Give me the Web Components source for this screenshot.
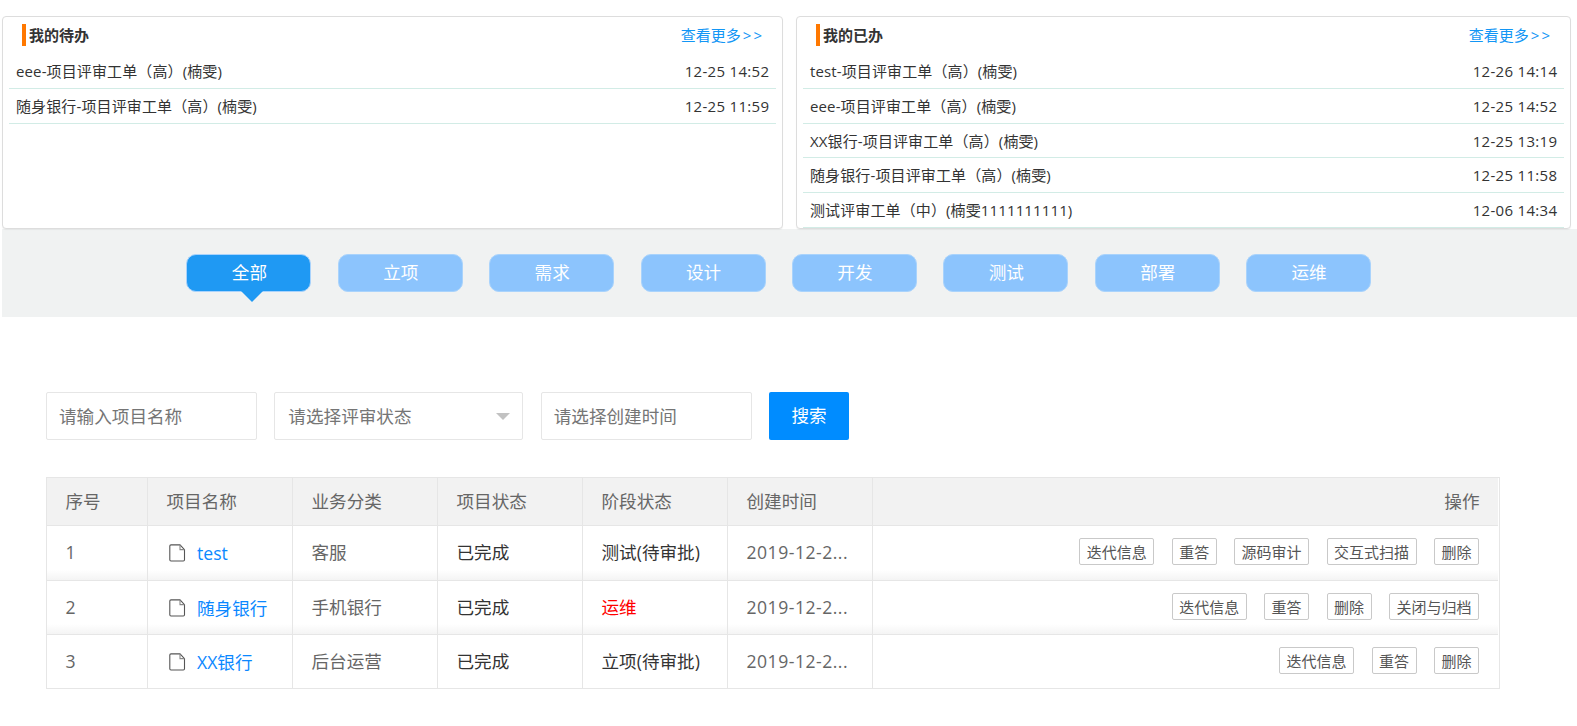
<!DOCTYPE html>
<html lang="zh-CN">
<head>
<meta charset="UTF-8">
<title>项目评审</title>
<style>
    body {
        margin: 0;
        background: #fff;
        color: #333;
        font-family: "Open Sans", "Noto Sans CJK SC", sans-serif;
        font-size: 15px;
        overflow: hidden;
    }
    .panels {
        display: grid;
        grid-template-columns: 781px 775px;
        column-gap: 13px;
        height: 213px;
        padding: 16px 0 0 2px;
    }
    .search {
        display: flex;
        gap: 17.35px;
        padding: 75px 0 0 46px;
    }
    project-table {
        margin: 37px 0 0 46px;
    }
</style>
</head>
<body>
<div class="panels">
    <task-panel heading="我的待办">
        <task-item time="12-25 14:52">eee-项目评审工单（高）(楠雯)</task-item>
        <task-item time="12-25 11:59">随身银行-项目评审工单（高）(楠雯)</task-item>
    </task-panel>
    <task-panel heading="我的已办">
        <task-item time="12-26 14:14">test-项目评审工单（高）(楠雯)</task-item>
        <task-item time="12-25 14:52">eee-项目评审工单（高）(楠雯)</task-item>
        <task-item time="12-25 13:19">XX银行-项目评审工单（高）(楠雯)</task-item>
        <task-item time="12-25 11:58">随身银行-项目评审工单（高）(楠雯)</task-item>
        <task-item time="12-06 14:34">测试评审工单（中）(楠雯1111111111)</task-item>
    </task-panel>
</div>

<phase-bar>
    <phase-tab active>全部</phase-tab>
    <phase-tab>立项</phase-tab>
    <phase-tab>需求</phase-tab>
    <phase-tab>设计</phase-tab>
    <phase-tab>开发</phase-tab>
    <phase-tab>测试</phase-tab>
    <phase-tab>部署</phase-tab>
    <phase-tab>运维</phase-tab>
</phase-bar>

<div class="search">
    <search-field>请输入项目名称</search-field>
    <search-field select>请选择评审状态</search-field>
    <search-field>请选择创建时间</search-field>
    <search-button>搜索</search-button>
</div>

<project-table>
    <project-row number="1" name="test" category="客服" status="已完成" phase="测试(待审批)" created="2019-12-2...">
        <action-button>迭代信息</action-button>
        <action-button>重答</action-button>
        <action-button>源码审计</action-button>
        <action-button>交互式扫描</action-button>
        <action-button>删除</action-button>
    </project-row>
    <project-row number="2" name="随身银行" category="手机银行" status="已完成" phase="运维" created="2019-12-2..." danger>
        <action-button>迭代信息</action-button>
        <action-button>重答</action-button>
        <action-button>删除</action-button>
        <action-button>关闭与归档</action-button>
    </project-row>
    <project-row number="3" name="XX银行" category="后台运营" status="已完成" phase="立项(待审批)" created="2019-12-2..." last>
        <action-button>迭代信息</action-button>
        <action-button>重答</action-button>
        <action-button>删除</action-button>
    </project-row>
</project-table>

<script>
const createTemplate = (html) => {
    const template = document.createElement('template');
    template.innerHTML = html;
    return template;
};

// Clones the template in the shadow root and copies the attributes to the [data-text] nodes
class BaseComponent extends HTMLElement {
    constructor() {
        super();
        this.attachShadow({ mode: 'open' });
    }
    connectedCallback() {
        const clone = this.constructor.template.content.cloneNode(true);
        clone.querySelectorAll('[data-text]').forEach((node) => {
            node.textContent = this.getAttribute(node.dataset.text) || '';
        });
        this.shadowRoot.replaceChildren(clone);
    }
}

class TaskPanel extends BaseComponent {
    static template = createTemplate(`
<style>
    :host {
        display: block;
        box-sizing: border-box;
        height: 213px;
        padding: 7px 6px 0;
        border: 1px solid #ddd;
        border-radius: 4px;
        background: #fff;
        box-shadow: 0 1px 1px rgba(0, 0, 0, .05);
    }
    header {
        display: flex;
        justify-content: space-between;
        height: 22px;
        line-height: 23px;
        padding: 0 12px 0 13px;
        margin-bottom: 8.4px;
    }
    h3 {
        margin: 0;
        padding-left: 3px;
        border-left: 4px solid #ff7800;
        font-size: 15px;
        font-weight: bold;
    }
    a {
        color: #1296f5;
    }
    a span {
        padding-left: 2px;
        letter-spacing: 2px;
    }
</style>
<header>
    <h3 data-text="heading"></h3>
    <a>查看更多<span>&gt;&gt;</span></a>
</header>
<slot></slot>
`);
}

class TaskItem extends BaseComponent {
    static template = createTemplate(`
<style>
    :host {
        display: flex;
        justify-content: space-between;
        box-sizing: border-box;
        height: 34.7px;
        line-height: 34px;
        padding: 0 7px;
        border-bottom: 1px solid #d2ece6;
        white-space: nowrap;
    }
    span {
        letter-spacing: .12px;
    }
    time {
        letter-spacing: .3px;
        margin-right: -.3px;
    }
</style>
<span><slot></slot></span>
<time data-text="time"></time>
`);
}

class PhaseBar extends BaseComponent {
    static template = createTemplate(`
<style>
    :host {
        display: flex;
        gap: 26.4px;
        box-sizing: border-box;
        height: 88px;
        margin-left: 2px;
        padding: 25px 0 0 184.4px;
        background: #f0f2f2;
    }
</style>
<slot></slot>
`);
}

class PhaseTab extends BaseComponent {
    static template = createTemplate(`
<style>
    :host {
        position: relative;
        box-sizing: border-box;
        width: 125px;
        height: 38px;
        padding-left: 1px;
        border: 1px solid #a9d3fc;
        border-radius: 10px;
        background: #8cc4fd;
        color: #fff;
        font-size: 17.6px;
        line-height: 34px;
        text-align: center;
    }
    :host([active]) {
        background: #1f99f3;
    }
    :host([active])::after {
        content: "";
        position: absolute;
        top: 36px;
        left: 54px;
        border: 11.5px solid transparent;
        border-top-color: #1f99f3;
        border-bottom: 0;
    }
</style>
<slot></slot>
`);
}

class SearchField extends BaseComponent {
    static template = createTemplate(`
<style>
    :host {
        display: flex;
        align-items: center;
        justify-content: space-between;
        box-sizing: border-box;
        width: 211px;
        height: 48px;
        padding: 0 12px;
        border: 1px solid #e6e6e6;
        border-radius: 2px;
        color: #757575;
        font-size: 17.6px;
    }
    :host([select]) {
        width: 249px;
        padding-left: 13px;
    }
    span {
        padding-bottom: 2px;
    }
    i {
        display: none;
        border: 7.5px solid transparent;
        border-top-color: #c2c2c2;
        border-bottom: 0;
    }
    :host([select]) i {
        display: block;
    }
</style>
<span><slot></slot></span>
<i></i>
`);
}

class SearchButton extends BaseComponent {
    static template = createTemplate(`
<style>
    :host {
        width: 80px;
        height: 48px;
        border-radius: 2px;
        background: #008cff;
        color: #fff;
        font-size: 17.6px;
        line-height: 46px;
        text-align: center;
    }
</style>
<slot></slot>
`);
}

class ProjectTable extends BaseComponent {
    static template = createTemplate(`
<style>
    :host {
        --columns: 100px 144px 144px 144px 144px 144px 1fr;
        display: block;
        box-sizing: border-box;
        width: 1454px;
        height: 212px;
        padding-right: 1px;
        border: 1px solid #e6e6e6;
        color: #666;
        font-size: 17.6px;
    }
    .head {
        display: grid;
        grid-template-columns: var(--columns);
        column-gap: 1px;
        height: 47px;
        line-height: 46px;
        border-bottom: 1px solid #e6e6e6;
        background: #e6e6e6;
    }
    .head span {
        padding: 0 18.5px;
        background: #f2f2f2;
    }
    .head span:last-child {
        text-align: right;
    }
</style>
<div class="head">
    <span>序号</span><span>项目名称</span><span>业务分类</span><span>项目状态</span><span>阶段状态</span><span>创建时间</span><span>操作</span>
</div>
<slot></slot>
`);
}

class ProjectRow extends BaseComponent {
    static template = createTemplate(`
<style>
    :host {
        display: grid;
        grid-template-columns: var(--columns);
        column-gap: 1px;
        box-sizing: border-box;
        height: 54px;
        line-height: 53px;
        border-bottom: 1px solid #e6e6e6;
        background: #e6e6e6;
        white-space: nowrap;
    }
    :host([number="1"]) {
        height: 55px;
    }
    :host([last]) {
        border-bottom: 0;
        height: 53px;
    }
    div {
        padding: 0 19px 0 18.5px;
        background: linear-gradient(to top, #f4f4f4, #fff 10px);
    }
    :host([last]) div {
        background: #fff;
    }
    .name {
        display: flex;
        align-items: center;
        padding-left: 21px;
    }
    .name svg {
        width: 17px;
        height: 18px;
        margin-right: 11px;
    }
    .name a {
        padding-top: 1px;
        line-height: 51px;
        color: #0b88ff;
    }
    .status, .phase {
        color: #333;
    }
    :host([danger]) .phase {
        color: #f00;
    }
    .created {
        letter-spacing: .5px;
    }
    .actions {
        display: flex;
        justify-content: flex-end;
        gap: 17.45px;
        padding-top: 12px;
    }
</style>
<div data-text="number"></div>
<div class="name">
    <svg viewBox="0 0 17 18" fill="none" stroke="#555" stroke-width="1.1">
        <path d="M2 .9h9l4.500 4.700v10.200a1.200 1.200 0 0 1-1.200 1.200H2A1.200 1.200 0 0 1 .8 15.800V2.100A1.200 1.200 0 0 1 2 .9z"/>
        <path d="M11 .9v4.700h4.500" stroke="#888"/>
    </svg>
    <a data-text="name"></a>
</div>
<div data-text="category"></div>
<div class="status" data-text="status"></div>
<div class="phase" data-text="phase"></div>
<div class="created" data-text="created"></div>
<div class="actions"><slot></slot></div>
`);
}

class ActionButton extends BaseComponent {
    static template = createTemplate(`
<style>
    :host {
        display: block;
        box-sizing: border-box;
        height: 27px;
        padding: 0 6.5px;
        border: 1px solid #c9c9c9;
        border-radius: 2px;
        background: #fff;
        color: #555;
        font-size: 15px;
        line-height: 26px;
    }
</style>
<slot></slot>
`);
}

customElements.define('task-panel', TaskPanel);
customElements.define('task-item', TaskItem);
customElements.define('phase-bar', PhaseBar);
customElements.define('phase-tab', PhaseTab);
customElements.define('search-field', SearchField);
customElements.define('search-button', SearchButton);
customElements.define('project-table', ProjectTable);
customElements.define('project-row', ProjectRow);
customElements.define('action-button', ActionButton);
</script>
</body>
</html>
